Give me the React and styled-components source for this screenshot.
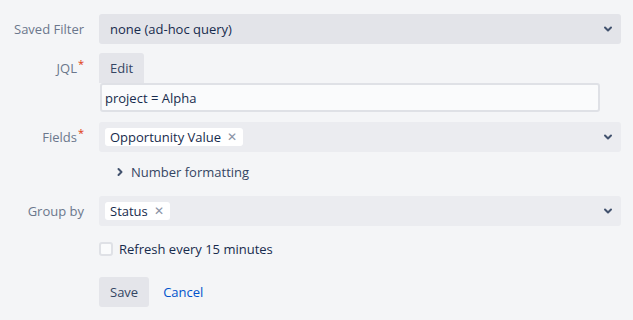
import React from "react";
import styled, { createGlobalStyle } from "styled-components";

const Global = createGlobalStyle`
  html, body { margin: 0; padding: 0; background: #f4f5f7; }
  body { font-family: "Open Sans", "Noto Sans", sans-serif; font-size: 13px; color: #172b4d; }
`;

const Form = styled.div`
  display: grid;
  grid-template-columns: 84px 522px;
  column-gap: 15px;
  padding: 14px 0 0 0;
  align-items: start;
`;

const Label = styled.div`
  text-align: right;
  color: #6b778c;
  height: 30px;
  line-height: 30px;
  margin-top: ${(p) => p.$mt || 0}px;
  white-space: nowrap;
`;

const Req = styled.span`
  color: #de350b;
  font-size: 11px;
  vertical-align: top;
  position: relative;
  top: -4px;
  margin-left: 1px;
`;

const Cell = styled.div`
  margin-top: ${(p) => p.$mt || 0}px;
  display: flex;
  flex-direction: column;
  align-items: flex-start;
`;

const Select = styled.div`
  box-sizing: border-box;
  width: 522px;
  height: 30px;
  background: ${(p) => (p.$light ? "#ebecf0" : "#e3e4e9")};
  border-radius: 3px;
  display: flex;
  align-items: center;
  padding: 0 8px 0 ${(p) => (p.$chips ? 6 : 11)}px;
  gap: 4px;
`;

const SelText = styled.span`
  flex: 1;
  color: #172b4d;
`;

const Chips = styled.div`
  flex: 1;
  display: flex;
  gap: 4px;
`;

const Chip = styled.span`
  display: inline-flex;
  align-items: center;
  background: #fff;
  border-radius: 3px;
  height: 18px;
  padding: 0 6px 0 5px;
  color: #172b4d;
  gap: 6px;
`;

const ChipX = styled.span`
  color: #8993a4;
  font-size: 12px;
  line-height: 1;
`;

const Button = styled.button`
  height: 30px;
  border: none;
  border-radius: 3px;
  background: #e4e5ea;
  color: #344563;
  font-family: inherit;
  font-size: 13px;
  padding: 0 ${(p) => p.$px || 11}px;
  border-bottom-left-radius: ${(p) => (p.$attached ? 0 : 3)}px;
  border-bottom-right-radius: ${(p) => (p.$attached ? 0 : 3)}px;
`;

const Input = styled.div`
  box-sizing: border-box;
  width: 500px;
  height: 29px;
  margin-left: 1px;
  background: #fafbfc;
  border: 2px solid #dfe1e6;
  border-radius: 3px;
  padding: 0 3px;
  display: flex;
  align-items: center;
  color: #172b4d;
`;

const Toggle = styled.div`
  display: flex;
  align-items: center;
  height: 24px;
  padding-left: 16px;
  gap: 6px;
  color: #344563;
`;

const CheckRow = styled.label`
  display: flex;
  align-items: center;
  gap: 6px;
  height: 20px;
  color: #172b4d;
`;

const Box = styled.span`
  box-sizing: border-box;
  width: 14px;
  height: 14px;
  border: 2px solid #dfe1e6;
  border-radius: 3px;
  background: #fafbfc;
`;

const Actions = styled.div`
  display: flex;
  align-items: center;
  gap: 14px;
`;

const Link = styled.a`
  color: #0052cc;
  text-decoration: none;
`;

const Chevron = ({ right }) => (
  <svg width="10" height="10" viewBox="0 0 10 10" style={right ? { transform: "rotate(-90deg)" } : undefined}>
    <path d="M2 3.5 L5 6.5 L8 3.5" fill="none" stroke="#42526e" strokeWidth="2" strokeLinecap="round" strokeLinejoin="round" />
  </svg>
);

export default function App() {
  return (
    <>
      <Global />
      <Form>
        <Label>Saved Filter</Label>
        <Cell>
          <Select>
            <SelText>none (ad-hoc query)</SelText>
            <Chevron />
          </Select>
        </Cell>

        <Label $mt={9}>JQL<Req>*</Req></Label>
        <Cell $mt={9}>
          <Button $attached>Edit</Button>
          <Input>project = Alpha</Input>
        </Cell>

        <Label $mt={10}>Fields<Req>*</Req></Label>
        <Cell $mt={10}>
          <Select $light $chips>
            <Chips>
              <Chip>Opportunity Value <ChipX>✕</ChipX></Chip>
            </Chips>
            <Chevron />
          </Select>
        </Cell>

        <div />
        <Cell $mt={8}>
          <Toggle>
            <Chevron right />
            Number formatting
          </Toggle>
        </Cell>

        <Label $mt={12}>Group by</Label>
        <Cell $mt={12}>
          <Select $light $chips>
            <Chips>
              <Chip>Status <ChipX>✕</ChipX></Chip>
            </Chips>
            <Chevron />
          </Select>
        </Cell>

        <div />
        <Cell $mt={13}>
          <CheckRow>
            <Box />
            Refresh every 15 minutes
          </CheckRow>
        </Cell>

        <div />
        <Cell $mt={18}>
          <Actions>
            <Button $px={11}>Save</Button>
            <Link href="#">Cancel</Link>
          </Actions>
        </Cell>
      </Form>
    </>
  );
}
